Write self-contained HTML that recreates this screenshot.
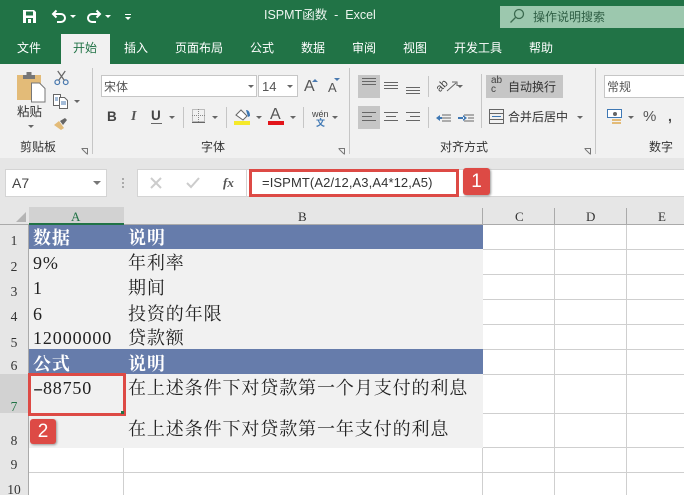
<!DOCTYPE html>
<html><head><meta charset="utf-8"><style>
html,body{margin:0;padding:0}
body{width:684px;height:495px;overflow:hidden;position:relative;background:#fff;font-family:"Liberation Sans","Noto Sans CJK SC",sans-serif;color:#333}
.a{position:absolute;white-space:nowrap}
.t{position:absolute;white-space:nowrap;top:40px;font-size:12px;line-height:16px;color:#fff}
.c{position:absolute;white-space:nowrap;font-family:"Liberation Serif","Noto Serif CJK SC",serif;font-size:18px;color:#222;letter-spacing:.9px;line-height:24px}
.h{color:#fff;font-weight:bold}
.r{position:absolute;width:28px;text-align:center;font-family:"Liberation Serif",serif;font-size:13.500px;color:#333;line-height:14px}
.ch{position:absolute;top:210px;font-family:"Liberation Serif",serif;font-size:13px;line-height:14px;color:#333}
.g{position:absolute;background:#cfcfcf}
.s{position:absolute;background:#c6c6c6;width:1px}
.ar{position:absolute;width:0;height:0;border-left:3px solid transparent;border-right:3px solid transparent;border-top:3px solid #666}
.l{position:absolute;background:#666;height:1px}
.lb{position:absolute;font-size:12px;color:#333;white-space:nowrap;line-height:14px}
svg{position:absolute;overflow:visible}
</style></head><body>
<!-- title -->
<div class="a" style="left:0;top:0;width:684px;height:64px;background:#217346"></div>
<svg style="left:22px;top:9px" width="15" height="15" viewBox="0 0 15 15"><path d="M1 1h11l2 2v11H1z" fill="#fff"/><rect x="4" y="2.500" width="7" height="4" fill="#217346"/><rect x="4" y="9" width="7" height="5" fill="#217346"/><rect x="6" y="10" width="3" height="4" fill="#fff"/></svg>
<svg style="left:51px;top:9px" width="16" height="15" viewBox="0 0 16 15" fill="none" stroke="#fff" stroke-width="2"><path d="M2 5h8a4 4 0 0 1 0 8H6"/><path d="M5.500 1.500L2 5l3.500 3.500"/></svg>
<div class="ar" style="left:70px;top:15px;border-top-color:#fff"></div>
<svg style="left:86px;top:9px" width="16" height="15" viewBox="0 0 16 15" fill="none" stroke="#fff" stroke-width="2"><path d="M14 5H6a4 4 0 0 0 0 8h4"/><path d="M10.500 1.500L14 5l-3.500 3.500"/></svg>
<div class="ar" style="left:105px;top:15px;border-top-color:#fff"></div>
<div class="a" style="left:125px;top:14px;width:6px;height:1px;background:#fff"></div>
<div class="ar" style="left:125px;top:17px;border-top-color:#fff"></div>
<div class="a" style="left:264px;top:7px;font-size:12.500px;line-height:16px;color:#eef5f0">ISPMT函数&nbsp; -&nbsp; Excel</div>
<div class="a" style="left:500px;top:6px;width:184px;height:22px;background:#9cc8ae"></div>
<svg style="left:509px;top:8px" width="16" height="16" viewBox="0 0 16 16" fill="none" stroke="#3c6b50" stroke-width="1.300"><circle cx="10" cy="6" r="4.500"/><path d="M6.500 9.500L1.500 14.500"/></svg>
<div class="a" style="left:533px;top:9px;font-size:12px;line-height:16px;color:#2f5f45">操作说明搜索</div>
<div class="a" style="left:61px;top:34px;width:49px;height:30px;background:#f1f1f1"></div>
<div class="t" style="left:17px">文件</div><div class="t" style="left:73px;color:#217346">开始</div><div class="t" style="left:124px">插入</div><div class="t" style="left:175px">页面布局</div><div class="t" style="left:250px">公式</div><div class="t" style="left:301px">数据</div><div class="t" style="left:352px">审阅</div><div class="t" style="left:403px">视图</div><div class="t" style="left:454px">开发工具</div><div class="t" style="left:529px">帮助</div>
<!-- ribbon -->
<div class="a" style="left:0;top:64px;width:684px;height:94px;background:#f1f1f1"></div>
<div class="a" style="left:0;top:158px;width:684px;height:50px;background:#e6e6e6"></div>
<div class="s" style="left:92px;top:68px;height:86px"></div><div class="s" style="left:349px;top:68px;height:86px"></div><div class="s" style="left:595px;top:68px;height:86px"></div>
<!-- clipboard -->
<svg style="left:17px;top:72px" width="29" height="31" viewBox="0 0 29 31"><rect x="0" y="3" width="24" height="25" fill="#e3bb78"/><rect x="6" y="3" width="12" height="4" fill="#777"/><rect x="9.500" y="0" width="5" height="4" fill="#777"/><path d="M14.500 11h8l5.500 5.500V30H14.500z" fill="#fff" stroke="#777"/></svg>
<div class="lb" style="left:17px;top:104px;font-size:12.500px;line-height:16px">粘贴</div>
<div class="ar" style="left:28px;top:125px"></div>
<svg style="left:54px;top:70px" width="15" height="16" viewBox="0 0 16 17" fill="none" stroke="#4a7ab0" stroke-width="1.300"><circle cx="3.500" cy="13" r="2.500"/><circle cx="12.500" cy="13" r="2.500"/><path d="M5 11L12 1M11 11L4 1" stroke="#666"/></svg>
<svg style="left:53px;top:94px" width="16" height="15" viewBox="0 0 16 15" fill="#fff" stroke="#666"><path d="M.5.500h7v11h-7z"/><path d="M6.500 3.500h5l3 3v8h-8z"/><path d="M8 8h5M8 10h5M2 4h3M2 6h3" stroke="#4a7ab0"/></svg>
<div class="ar" style="left:74px;top:100px"></div>
<svg style="left:54px;top:116px" width="16" height="15" viewBox="0 0 16 15"><path d="M0 9l5-4 5 7-3 2z" fill="#e3bb78"/><path d="M6 5l5-3 2 2-4 5z" fill="#666"/></svg>
<div class="lb" style="left:20px;top:140px">剪贴板</div>
<svg style="left:81px;top:148px" width="7" height="7" fill="none" stroke="#777"><path d="M.5 .5h6v6M1 1l5 5"/></svg>
<!-- font -->
<div class="a" style="left:101px;top:75px;width:156px;height:22px;background:#fff;border:1px solid #c6c6c6;box-sizing:border-box"></div>
<div class="a" style="left:258px;top:75px;width:40px;height:22px;background:#fff;border:1px solid #c6c6c6;box-sizing:border-box"></div>
<div class="lb" style="left:104px;top:80px;color:#555">宋体</div><div class="lb" style="left:262px;top:80px;font-size:13px;color:#555">14</div>
<div class="ar" style="left:248px;top:85px"></div><div class="ar" style="left:287px;top:85px"></div>
<div class="lb" style="left:304px;top:79px;font-size:16px;line-height:16px;color:#555">A</div><div class="lb" style="left:328px;top:81px;font-size:13px;color:#555">A</div>
<div class="a" style="left:312px;top:79px;width:0;height:0;border:3px solid transparent;border-top:0;border-bottom:3px solid #4a7ab0"></div>
<div class="ar" style="left:334px;top:78px;border-top-color:#4a7ab0"></div>
<div class="lb" style="left:107px;top:110px;font-size:13.500px;font-weight:bold;color:#444">B</div>
<div class="lb" style="left:131px;top:110px;font-size:14px;font-style:italic;font-family:'Liberation Serif',serif;font-weight:bold;color:#555">I</div>
<div class="lb" style="left:151px;top:109px;font-size:13.500px;font-weight:bold;color:#444">U</div><div class="l" style="left:151px;top:123px;width:11px"></div>
<div class="ar" style="left:169px;top:116px"></div>
<div class="s" style="left:183px;top:107px;height:21px"></div>
<svg style="left:192px;top:109px" width="13" height="13" fill="none" stroke="#888" stroke-dasharray="1 1"><rect x=".5" y=".5" width="12" height="12"/><path d="M6.500 0v13M0 6.500h13"/></svg><div class="l" style="left:192px;top:122px;width:13px"></div>
<div class="ar" style="left:212px;top:116px"></div>
<div class="s" style="left:226px;top:107px;height:21px"></div>
<svg style="left:235px;top:108px" width="16" height="14" viewBox="0 0 16 14"><path d="M1 7l5-5 6 6-4 4z" fill="#fff" stroke="#666"/><path d="M11 2c3 0 4 3 4 6l-2 1z" fill="#3f78b4"/></svg>
<div class="a" style="left:234px;top:121px;width:16px;height:4px;background:#f5e92a"></div>
<div class="ar" style="left:256px;top:116px"></div>
<div class="lb" style="left:270px;top:107px;font-size:16px;line-height:16px;color:#555">A</div>
<div class="a" style="left:268px;top:121px;width:16px;height:4px;background:#e2141a"></div>
<div class="ar" style="left:290px;top:116px"></div>
<div class="s" style="left:303px;top:107px;height:21px"></div>
<div class="lb" style="left:312px;top:109px;font-size:9px;line-height:10px;color:#444">wén</div>
<div class="lb" style="left:316px;top:118px;font-size:9px;line-height:10px;color:#3f78b4;font-weight:bold">文</div>
<div class="ar" style="left:332px;top:116px"></div>
<div class="lb" style="left:201px;top:140px">字体</div>
<svg style="left:338px;top:148px" width="7" height="7" fill="none" stroke="#777"><path d="M.5 .5h6v6M1 1l5 5"/></svg>
<!-- align -->
<div class="a" style="left:358px;top:75px;width:22px;height:23px;background:#c6c6c6"></div>
<div class="a" style="left:358px;top:106px;width:22px;height:23px;background:#c6c6c6"></div>
<div class="l" style="left:362px;top:78px;width:14px"></div><div class="l" style="left:362px;top:81px;width:14px"></div><div class="l" style="left:362px;top:84px;width:14px"></div>
<div class="l" style="left:384px;top:82px;width:14px"></div><div class="l" style="left:384px;top:85px;width:14px"></div><div class="l" style="left:384px;top:88px;width:14px"></div>
<div class="l" style="left:406px;top:87px;width:14px"></div><div class="l" style="left:406px;top:90px;width:14px"></div><div class="l" style="left:406px;top:93px;width:14px"></div>
<div class="l" style="left:362px;top:112px;width:14px"></div><div class="l" style="left:362px;top:116px;width:10px"></div><div class="l" style="left:362px;top:120px;width:14px"></div>
<div class="l" style="left:384px;top:112px;width:14px"></div><div class="l" style="left:386px;top:116px;width:10px"></div><div class="l" style="left:384px;top:120px;width:14px"></div>
<div class="l" style="left:406px;top:112px;width:14px"></div><div class="l" style="left:410px;top:116px;width:10px"></div><div class="l" style="left:406px;top:120px;width:14px"></div>
<div class="s" style="left:428px;top:76px;height:21px"></div><div class="s" style="left:428px;top:107px;height:21px"></div>
<div class="lb" style="left:436px;top:81px;font-size:11px;line-height:10px;transform:rotate(-45deg);color:#444">ab</div>
<svg style="left:446px;top:80px" width="12" height="12" fill="none" stroke="#666"><path d="M1 11L10 3M6 2h5v4"/></svg>
<div class="ar" style="left:457px;top:85px"></div>
<svg style="left:436px;top:112px" width="16" height="12"><path d="M6 3h9M6 6h9M6 9h9" stroke="#666" fill="none"/><path d="M0 6l4-3v6z M3 5h3v2H3z" fill="#3f78b4"/></svg>
<svg style="left:458px;top:112px" width="16" height="12"><path d="M6 3h10M10 6h6M6 9h10" stroke="#666" fill="none"/><path d="M9 6L5 3v6z M0 5h6v2H0z" fill="#3f78b4"/></svg>
<div class="s" style="left:481px;top:74px;height:54px"></div>
<div class="a" style="left:486px;top:75px;width:77px;height:23px;background:#c6c6c6"></div>
<div class="lb" style="left:491px;top:76px;font-size:10px;line-height:10px;color:#444">ab</div><div class="lb" style="left:491px;top:85px;font-size:10px;line-height:10px;color:#444">c</div>
<div class="lb" style="left:508px;top:80px">自动换行</div>
<svg style="left:489px;top:109px" width="15" height="15" fill="none" stroke="#666"><rect x=".5" y=".5" width="14" height="14"/><path d="M0 4.500h15M0 10.500h15"/><path d="M3 7.500h9" stroke="#3f78b4"/></svg>
<div class="lb" style="left:508px;top:110px">合并后居中</div>
<div class="ar" style="left:577px;top:116px"></div>
<div class="lb" style="left:440px;top:140px">对齐方式</div>
<svg style="left:584px;top:148px" width="7" height="7" fill="none" stroke="#777"><path d="M.5 .5h6v6M1 1l5 5"/></svg>
<!-- number -->
<div class="a" style="left:604px;top:75px;width:90px;height:23px;background:#fff;border:1px solid #c6c6c6;box-sizing:border-box"></div>
<div class="lb" style="left:607px;top:80px;color:#555">常规</div>
<svg style="left:607px;top:109px" width="16" height="16"><rect x=".5" y=".5" width="14" height="8" fill="#fff" stroke="#3f78b4"/><circle cx="8" cy="5" r="2" fill="#666"/><rect x="5" y="10" width="9" height="2" fill="#e3bb78"/><rect x="5" y="13" width="9" height="2" fill="#e3bb78"/></svg>
<div class="ar" style="left:628px;top:116px"></div>
<div class="lb" style="left:643px;top:109px;font-size:15px;line-height:16px;color:#555">%</div>
<div class="lb" style="left:668px;top:109px;font-size:14px;font-weight:bold;color:#444">,</div>
<div class="lb" style="left:649px;top:140px">数字</div>
<!-- formula bar -->
<div class="a" style="left:5px;top:169px;width:102px;height:28px;background:#fff;border:1px solid #d4d4d4;box-sizing:border-box"></div>
<div class="lb" style="left:12px;top:176px;font-size:14px;color:#444">A7</div>
<div class="ar" style="left:93px;top:181px;border-left-width:4px;border-right-width:4px;border-top-width:4px;border-top-color:#777"></div>
<div class="a" style="left:122px;top:178px;width:2px;height:2px;background:#aaa;box-shadow:0 4px #aaa,0 8px #aaa"></div>
<div class="a" style="left:137px;top:169px;width:110px;height:28px;background:#fff;border:1px solid #d4d4d4;box-sizing:border-box"></div>
<svg style="left:150px;top:177px" width="12" height="12" fill="none" stroke="#ccc" stroke-width="2"><path d="M1 1l10 10M11 1L1 11"/></svg>
<svg style="left:186px;top:177px" width="14" height="12" fill="none" stroke="#ccc" stroke-width="2"><path d="M1 6l4 4 8-9"/></svg>
<div class="lb" style="left:223px;top:176px;font-family:'Liberation Serif',serif;font-style:italic;font-weight:bold;font-size:13px;color:#555">fx</div>
<div class="a" style="left:247px;top:169px;width:437px;height:28px;background:#fff;border-top:1px solid #d4d4d4;border-bottom:1px solid #d4d4d4;box-sizing:border-box"></div>
<div class="a" style="left:249px;top:169px;width:210px;height:28px;border:3px solid #dd4a45;box-sizing:border-box"></div>
<div class="lb" style="left:262px;top:175px;font-size:13px;line-height:16px;letter-spacing:.1px;color:#333">=ISPMT(A2/12,A3,A4*12,A5)</div>
<div class="a" style="left:463px;top:168px;width:27px;height:27px;background:#dd4a45;border-radius:3px;box-shadow:1px 1px 2px #999;color:#fff;font-size:19px;line-height:27px;text-align:center">1</div>
<!-- grid -->
<div class="a" style="left:0;top:207px;width:684px;height:18px;background:#e6e6e6;border-bottom:1px solid #aaa;box-sizing:border-box"></div>
<div class="a" style="left:0;top:225px;width:28px;height:270px;background:#e6e6e6;border-right:1px solid #aaa;box-sizing:content-box"></div>
<div class="a" style="left:29px;top:207px;width:95px;height:18px;background:#d2d2d2;border-bottom:2px solid #217346;box-sizing:border-box"></div>
<div class="a" style="left:16px;top:212px;width:0;height:0;border-left:10px solid transparent;border-bottom:10px solid #b4b4b4"></div>
<div class="ch" style="left:71px;color:#217346">A</div><div class="ch" style="left:298px">B</div><div class="ch" style="left:515px">C</div><div class="ch" style="left:586px">D</div><div class="ch" style="left:658px">E</div>
<div class="s" style="left:482px;top:208px;height:17px;background:#aaa"></div><div class="s" style="left:554px;top:208px;height:17px;background:#aaa"></div><div class="s" style="left:626px;top:208px;height:17px;background:#aaa"></div>
<div class="g" style="left:29px;top:249px;width:655px;height:1px"></div><div class="g" style="left:29px;top:274px;width:655px;height:1px"></div><div class="g" style="left:29px;top:299px;width:655px;height:1px"></div><div class="g" style="left:29px;top:324px;width:655px;height:1px"></div><div class="g" style="left:29px;top:349px;width:655px;height:1px"></div><div class="g" style="left:29px;top:374px;width:655px;height:1px"></div><div class="g" style="left:29px;top:413px;width:655px;height:1px"></div><div class="g" style="left:29px;top:447px;width:655px;height:1px"></div><div class="g" style="left:29px;top:472px;width:655px;height:1px"></div>
<div class="g" style="left:123px;top:447px;width:1px;height:48px"></div><div class="g" style="left:482px;top:447px;width:1px;height:48px"></div><div class="g" style="left:554px;top:225px;width:1px;height:270px"></div><div class="g" style="left:626px;top:225px;width:1px;height:270px"></div>
<div class="a" style="left:29px;top:225px;width:454px;height:24px;background:#667cab"></div>
<div class="a" style="left:29px;top:249px;width:454px;height:100px;background:#f1f1f1"></div>
<div class="a" style="left:29px;top:349px;width:454px;height:25px;background:#667cab"></div>
<div class="a" style="left:29px;top:374px;width:454px;height:74px;background:#f1f1f1"></div>
<div class="a" style="left:0;top:374px;width:28px;height:39px;background:#d2d2d2"></div>
<div class="r" style="top:234px;left:0">1</div><div class="r" style="top:260px;left:0">2</div><div class="r" style="top:285px;left:0">3</div><div class="r" style="top:310px;left:0">4</div><div class="r" style="top:336px;left:0">5</div><div class="r" style="top:359px;left:0">6</div><div class="r" style="top:400px;left:0;color:#217346">7</div><div class="r" style="top:434px;left:0">8</div><div class="r" style="top:458px;left:0">9</div><div class="r" style="top:483px;left:0">10</div>
<div class="c h" style="left:33px;top:226px">数据</div><div class="c h" style="left:128px;top:226px">说明</div>
<div class="c" style="left:33px;top:251px">9%</div><div class="c" style="left:128px;top:251px">年利率</div>
<div class="c" style="left:33px;top:276px">1</div><div class="c" style="left:128px;top:276px">期间</div>
<div class="c" style="left:33px;top:302px">6</div><div class="c" style="left:128px;top:302px">投资的年限</div>
<div class="c" style="left:33px;top:326px">12000000</div><div class="c" style="left:128px;top:326px">贷款额</div>
<div class="c h" style="left:33px;top:352px">公式</div><div class="c h" style="left:128px;top:352px">说明</div>
<div class="c" style="left:33px;top:376px;letter-spacing:.8px"><span style="display:inline-block;width:10px;letter-spacing:0;transform:scaleX(1.700);transform-origin:0 50%">-</span>88750</div><div class="c" style="left:128px;top:376px">在上述条件下对贷款第一个月支付的利息</div>
<div class="c" style="left:128px;top:417px">在上述条件下对贷款第一年支付的利息</div>
<div class="a" style="left:28px;top:373px;width:98px;height:43px;border:3px solid #dd4a45;box-sizing:border-box"></div>
<div class="a" style="left:121px;top:411px;width:3px;height:3px;background:#217346"></div>
<div class="a" style="left:30px;top:419px;width:26px;height:25px;background:#dd4a45;border-radius:3px;box-shadow:1px 1px 2px #999;color:#fff;font-size:19px;line-height:25px;text-align:center">2</div>
</body></html>
